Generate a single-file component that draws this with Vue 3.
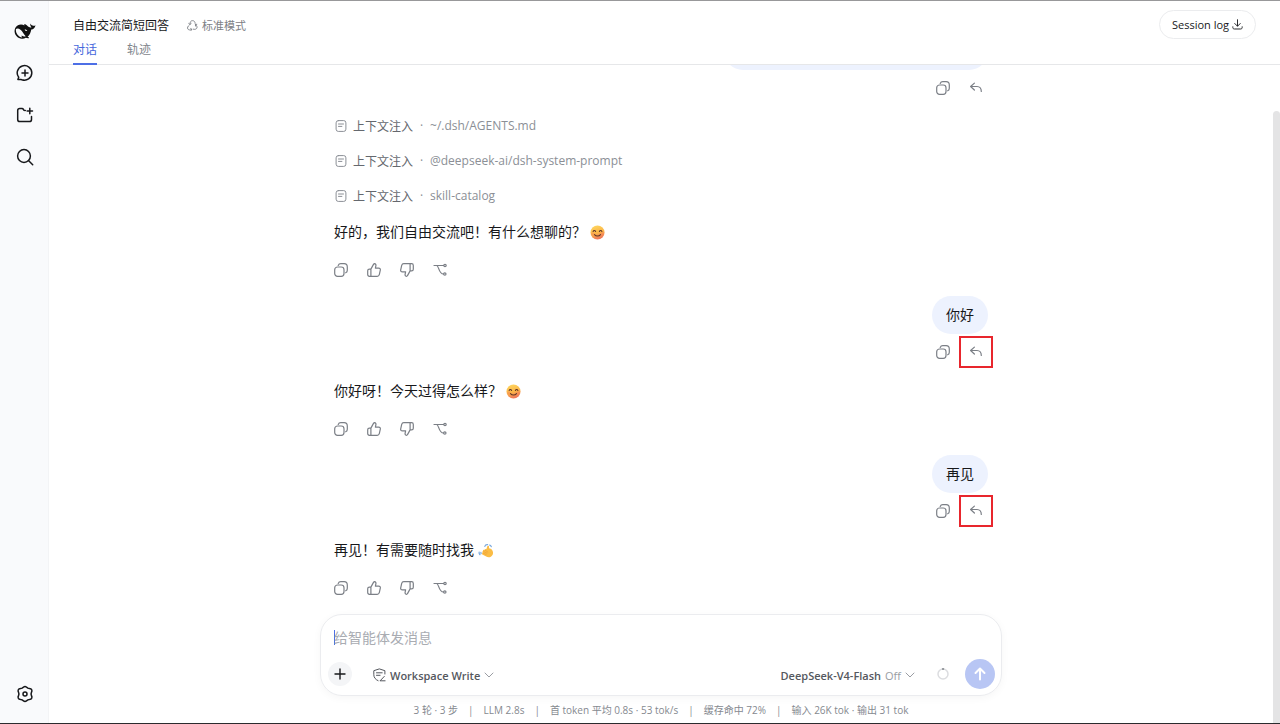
<template>
  <div class="app">
    <svg class="sprite" aria-hidden="true">
      <symbol id="copy" viewBox="0 0 14 14">
        <rect x="0.7" y="4" width="9.3" height="9.3" rx="2.8" />
        <path d="M4.2 2.4C4.7 1.2 5.6 .7 6.8 .7h3.4c2 0 3.1 1.2 3.1 3.2v3.3c0 1.3-.6 2.2-1.6 2.6" />
      </symbol>
      <symbol id="up" viewBox="0 0 14 14">
        <path d="M3.9 6.1 6.5 1.4c.2-.5.6-.7 1.1-.7 1 .1 1.5.9 1.300 1.900l-.5 2.500h3.200c1.200 0 2 .9 1.700 2.100l-1 4.400c-.3 1.100-1 1.700-2.100 1.700H2.400c-1 0-1.700-.7-1.700-1.700V7.800c0-1 .7-1.700 1.700-1.700h1.500zM3.900 6.100v7.100" />
      </symbol>
      <symbol id="down" viewBox="0 0 14 14">
        <path d="M10.100 7.900 7.500 12.600c-.2.500-.6.700-1.100.7-1-.1-1.500-.9-1.300-1.900l.5-2.500H2.400C1.200 8.900.4 8 .7 6.800l1-4.400C2 1.300 2.700.7 3.800.7h7.800c1 0 1.700.7 1.700 1.700v3.800c0 1-.7 1.700-1.700 1.700h-1.500zM10.100 7.900V.8" />
      </symbol>
      <symbol id="branch" viewBox="0 0 14 14">
        <path d="M1 2.500h9.600M3.600 2.500c2.500 0 1.800 8.500 6.900 8.500" />
        <circle cx="12" cy="2.500" r="1.200" />
        <circle cx="11.800" cy="11" r="1.200" />
      </symbol>
      <symbol id="reply" viewBox="0 0 14 14">
        <path d="M5.400 2.100 1.600 5.500l3.800 3.500M1.800 5.500h6.200c2.900 0 4.300 1.800 4.300 5" />
      </symbol>
      <symbol id="note" viewBox="0 0 12 12">
        <rect x="1.100" y=".6" width="9.800" height="10.800" rx="2.200" />
        <path d="M3.500 4h5M3.500 6.400h3.400" />
      </symbol>
      <symbol id="chevron" viewBox="0 0 10 10">
        <path d="M1 3l4 4 4-4" />
      </symbol>
    </svg>

    <nav class="sidebar">
      <a class="logo" href="#" aria-label="DeepSeek">
        <svg width="22" height="18" viewBox="0 0 22 18">
          <path
            class="solid"
            d="M21.500 3.200c-1 .7-1.900.5-2.900.3-1.200-.2-1.700-.9-2.300-2-.2 1.600.1 2.800 1.200 3.700-.9.400-1.700.3-2.600-.2C13.400 3.900 12.200 2.700 10.600 2c-.5.4-.5.900-.1 1.400C8.800 2.300 6 2 3.900 3.200 1.500 4.600.3 7.200.6 9.800c.4 3.800 3.400 6.700 7.200 7 1.500.1 2.900-.2 4-1 .9.300 2.500.8 3.100.3.500-.5-.7-.9-1.300-1.300 2.300-2 3.100-4.300 3.700-7.200 2.200-.4 3.700-1.900 4.200-4.400z"
          />
          <path
            class="belly"
            d="M1.900 7.100c1.200-.9 3-.6 4.600.6 2 1.500 3 4.200 5.200 6.500-1.300.9-2.700.2-4-.6-.3.600-.1 1.300.7 1.900C4.600 15.400 1.500 11.500 1.900 7.100z"
          />
          <path class="belly" d="M10.600 7.600c1-.4 2.200.2 2.700 1.400-.9.300-2 .1-2.700-1.400z" />
        </svg>
      </a>
      <button aria-label="新对话">
        <svg width="18" height="18" viewBox="0 0 18 18">
          <path d="M3.600 15.600H1.900l.8-2.300A7.300 7.300 0 1 1 5.900 15.700c-.7-.3-1.400-.3-2.300-.1zM9 6v6M6 9h6" />
        </svg>
      </button>
      <button aria-label="新建工作区">
        <svg width="18" height="18" viewBox="0 0 18 18">
          <path d="M9.300 4.600C8.200 4.600 7.700 4.200 7.400 3.400 7.100 2.800 6.600 2.500 6 2.500H3.800c-1.300 0-2.100.8-2.100 2.100v8.800c0 1.300.8 2.100 2.100 2.100h9.600c1.300 0 2.100-.8 2.100-2.100V10.500M13.800 2.300v5.400M11.100 5h5.400" />
        </svg>
      </button>
      <button aria-label="搜索">
        <svg width="18" height="18" viewBox="0 0 18 18">
          <circle cx="8" cy="8" r="6.400" />
          <path d="m12.700 12.700 4 4" />
        </svg>
      </button>
      <button class="settings" aria-label="设置">
        <svg width="18" height="18" viewBox="0 0 18 18">
          <path d="M7.500 2.200q1.500-1.200 3 0l1.400 1q.6.300 1.400.3 2 .1 2.500 1.600.4 1.200-.4 2.400-.7 1.500 0 3 .8 1.200.4 2.400-.5 1.500-2.500 1.600-.8 0-1.400.3l-1.400 1q-1.500 1.200-3 0l-1.400-1q-.6-.3-1.400-.3-2-.1-2.500-1.600-.4-1.200.4-2.400.7-1.500 0-3-.8-1.200-.4-2.400.5-1.500 2.500-1.600.8 0 1.400-.3z" />
          <circle cx="9" cy="9" r="2" />
        </svg>
      </button>
    </nav>

    <main class="main">
      <header class="header">
        <div class="heading">
          <div class="title-row">
            <h1>自由交流简短回答</h1>
            <span class="mode">
              <svg width="11" height="11" viewBox="0 0 12 12">
                <path d="M3.200 4.600C3.200 2 4.300.7 6 .7s2.900 1.300 2.900 3M9.200 4.900c1.600 1.200 2.200 2.700 1.500 4-.6 1.200-2.200 1.700-3.900 1.100M5 10.300c-1.700.9-3.400.7-4.100-.5-.8-1.300-.1-3 1.400-4M1.900 3.900l1.300 1 1.300-1M9.300 6.600l-.1-1.700 1.500-.2M4 9l1.100 1.200-.7 1.300" />
              </svg>
              标准模式
            </span>
          </div>
          <div class="tabs">
            <button
              v-for="tab in tabs"
              :key="tab"
              :class="{ active: tab === activeTab }"
              @click="activeTab = tab"
            >{{ tab }}</button>
          </div>
        </div>
        <button class="session-log">
          Session log
          <svg width="11" height="11" viewBox="0 0 12 12">
            <path d="M6 .8v6.800M3 4.900l3 3 3-3M.9 8.500v.7c0 1.100.6 1.700 1.700 1.700h6.800c1.100 0 1.700-.6 1.700-1.700v-.7" />
          </svg>
        </button>
      </header>

      <div class="body">
        <div class="column">
          <div class="chat">
            <div class="bubble clipped"></div>
            <div class="actions user">
              <button aria-label="复制"><svg><use href="#copy" /></svg></button>
              <button aria-label="撤回"><svg><use href="#reply" /></svg></button>
            </div>

            <ul class="context">
              <li v-for="item in contexts" :key="item">
                <svg><use href="#note" /></svg>
                <span class="kind">上下文注入</span>
                <span class="dot">·</span>
                <span>{{ item }}</span>
              </li>
            </ul>

            <template v-for="(turn, i) in turns" :key="i">
              <template v-if="turn.user">
                <div class="bubble">{{ turn.user }}</div>
                <div class="actions user">
                  <button aria-label="复制"><svg><use href="#copy" /></svg></button>
                  <button class="marked" aria-label="撤回"><svg><use href="#reply" /></svg></button>
                </div>
              </template>
              <p class="answer">
                {{ turn.answer }}
                <svg v-if="turn.emoji === 'smile'" class="emoji" viewBox="0 0 16 16">
                  <defs>
                    <linearGradient id="face" x1="0" y1="0" x2="0.300" y2="1">
                      <stop offset="0" stop-color="#ffdb62" />
                      <stop offset="0.600" stop-color="#fbb548" />
                      <stop offset="1" stop-color="#ef7a58" />
                    </linearGradient>
                  </defs>
                  <circle cx="8" cy="8" r="7.500" fill="url(#face)" />
                  <circle cx="3" cy="9.500" r="1.800" fill="#f4775c" opacity="0.350" />
                  <circle cx="13" cy="9.500" r="1.800" fill="#f4775c" opacity="0.350" />
                  <path
                    d="M3.300 7c.5-1.400 2.200-1.400 2.700 0M10 7c.5-1.400 2.200-1.400 2.700 0M4.800 10.200c1.600 2 4.800 2 6.400 0"
                    fill="none" stroke="#5e3428" stroke-width="1.100" stroke-linecap="round"
                  />
                </svg>
                <svg v-else class="emoji" viewBox="-1 0 16 16">
                  <path
                    d="M3.600 12.200c-.8-.6-.3-1.700.6-1.500-1.200-.7-.7-2.100.5-1.800-.9-1-.1-2.200 1-1.600l.7.4c-.5-1.100.6-1.900 1.500-1.100l.9-2.800c.4-1.400 2-1.200 2 .2l-.1 1.700c1.500.3 3.200 1.200 3.900 2.800 1 2.300.3 4.900-1.900 6.100-1.600.9-3.500.7-5-.1z"
                    fill="#fbbd45"
                  />
                  <path d="M4.500 10.800l3.200 1.500M5 9l3.500 1.900M6.500 7.700l3 2" fill="none" stroke="#ea9734" stroke-width="0.600" />
                  <path
                    d="M6.300 3.600C6.700 2.300 7.800 1.500 9.200 1.700M11.500 2.200c.9.300 1.400.9 1.700 1.700M.2 9.800c-.2 1.100.1 2 .9 2.700M2.100 9.900c-.1.600 0 1 .3 1.400"
                    fill="none" stroke="#79a8de" stroke-width="1.300" stroke-linecap="round"
                  />
                </svg>
              </p>
              <div class="actions">
                <button v-for="a in answerActions" :key="a.icon" :aria-label="a.label">
                  <svg><use :href="'#' + a.icon" /></svg>
                </button>
              </div>
            </template>
          </div>

          <form class="composer" @submit.prevent>
            <div class="field">
              <span class="caret"></span>
              <input v-model="draft" type="text" placeholder="给智能体发消息" aria-label="给智能体发消息" />
            </div>
            <div class="toolbar">
              <button type="button" class="add" aria-label="添加">
                <svg width="12" height="12" viewBox="0 0 12 12"><path d="M6 1v10M1 6h10" /></svg>
              </button>
              <button type="button" class="picker access">
                <svg width="13" height="14" viewBox="0 0 13 14">
                  <path d="M11.900 6V2.700L6.300.9.800 2.700v4c0 2.900 1.800 4.900 4.300 6M3.500 4.800h5.700M3.500 7.300h3.600M7.300 12.800h4.800M7.300 12.600l4-4.200" />
                </svg>
                Workspace Write
                <svg class="chevron"><use href="#chevron" /></svg>
              </button>
              <button type="button" class="picker model">
                DeepSeek-V4-Flash <span class="effort">Off</span>
                <svg class="chevron"><use href="#chevron" /></svg>
              </button>
              <svg class="usage" viewBox="0 0 12 12">
                <circle cx="6" cy="6" r="5" />
                <path d="M5.600 1h.9" />
              </svg>
              <button type="submit" class="send" aria-label="发送">
                <svg width="14" height="14" viewBox="0 0 14 14"><path d="M7 12.500V1.500M2.500 6 7 1.500 11.500 6" /></svg>
              </button>
            </div>
          </form>

          <footer class="stats">
            <span v-for="stat in stats" :key="stat">{{ stat }}</span>
          </footer>
        </div>
        <div class="scrollbar"></div>
      </div>
    </main>
  </div>
</template>

<script setup>
import { ref } from 'vue'

const tabs = ['对话', '轨迹']
const activeTab = ref('对话')
const draft = ref('')

const contexts = ['~/.dsh/AGENTS.md', '@deepseek-ai/dsh-system-prompt', 'skill-catalog']

const turns = [
  { answer: '好的，我们自由交流吧！有什么想聊的？', emoji: 'smile' },
  { user: '你好', answer: '你好呀！今天过得怎么样？', emoji: 'smile' },
  { user: '再见', answer: '再见！有需要随时找我', emoji: 'wave' }
]

const answerActions = [
  { icon: 'copy', label: '复制' },
  { icon: 'up', label: '喜欢' },
  { icon: 'down', label: '不喜欢' },
  { icon: 'branch', label: '分支' }
]

const stats = [
  '3 轮 · 3 步',
  'LLM 2.8s',
  '首 token 平均 0.8s · 53 tok/s',
  '缓存命中 72%',
  '输入 26K tok · 输出 31 tok'
]
</script>

<style>
body {
  margin: 0;
}
</style>

<style scoped>
.app {
  box-sizing: border-box;
  display: flex;
  height: 100vh;
  border-top: 1px solid #98989a;
  border-bottom: 1px solid #2b2b2e;
  background: #fff;
  color: #17181b;
  font-family: "Open Sans", "Noto Sans CJK SC", sans-serif;
  font-size: 12px;
}

.sprite {
  position: absolute;
  width: 0;
  height: 0;
}

svg {
  flex: none;
  fill: none;
  stroke: currentColor;
  stroke-linecap: round;
  stroke-linejoin: round;
}

button {
  padding: 0;
  border: 0;
  background: none;
  color: inherit;
  font: inherit;
  cursor: pointer;
}

/* sidebar */
.sidebar {
  display: flex;
  flex: none;
  flex-direction: column;
  align-items: center;
  gap: 24px;
  box-sizing: border-box;
  width: 49px;
  padding: 21px 0 20px 1px;
  background: #f9fafc;
  border-right: 1px solid #f3f4f6;
}

.sidebar svg {
  display: block;
  stroke-width: 1.5;
}

.logo {
  color: #111;
}

.sidebar .logo svg {
  stroke: none;
}

.solid {
  fill: #111;
}

.belly {
  fill: #f9fafc;
}

.settings {
  margin-top: auto;
}

/* header */
.main {
  display: flex;
  flex: 1;
  flex-direction: column;
  min-width: 0;
}

.header {
  display: flex;
  justify-content: space-between;
  align-items: flex-start;
  padding: 0 24px;
  border-bottom: 1px solid #e6e7e9;
}

.title-row {
  display: flex;
  align-items: center;
  gap: 18px;
  height: 24px;
  padding-top: 12px;
}

h1 {
  margin: 0;
  font-size: 12px;
  font-weight: 400;
}

.mode {
  display: flex;
  align-items: center;
  gap: 4px;
  color: #7d8085;
  font-size: 11px;
}

.tabs {
  display: flex;
  gap: 30px;
}

.tabs button {
  height: 28px;
  padding-bottom: 2px;
  border-bottom: 2px solid transparent;
  color: #81858c;
}

.tabs .active {
  border-color: #4d6fe6;
  color: #4568dc;
}

.header {
  height: 63px;
}

.session-log {
  display: flex;
  align-items: center;
  gap: 3px;
  height: 29px;
  margin-top: 9px;
  padding: 0 12px;
  border: 1px solid #ebecee;
  border-radius: 15px;
  font-size: 11px;
}

/* conversation */
.body {
  display: flex;
  flex: 1;
  min-height: 0;
}

.column {
  display: flex;
  flex: 1;
  flex-direction: column;
  align-items: center;
  min-width: 0;
}

.scrollbar {
  width: 7px;
  margin-top: 46px;
  border-radius: 4px 4px 0 0;
  background: #e4e4e5;
}

.chat {
  display: flex;
  flex: 1;
  flex-direction: column;
  justify-content: flex-end;
  box-sizing: border-box;
  width: 100%;
  max-width: 682px;
  min-height: 0;
  padding: 0 14px 10px;
  overflow: hidden;
}

.bubble {
  flex: none;
  align-self: flex-end;
  box-sizing: border-box;
  height: 38px;
  margin: 10px 0 2px;
  padding: 0 14px;
  border-radius: 19px;
  background: #edf2fe;
  font-size: 14px;
  line-height: 38px;
}

.clipped {
  width: 264px;
}

.actions {
  display: flex;
  flex: none;
  align-items: center;
  gap: 19px;
  height: 32px;
  color: #7b7f86;
}

.actions.user {
  justify-content: flex-end;
  padding-right: 5px;
}

.actions button {
  position: relative;
  height: 14px;
}

.actions svg {
  display: block;
  width: 14px;
  height: 14px;
  stroke-width: 1.2;
}

.marked::after {
  position: absolute;
  inset: -9px -10px;
  border: 2px solid #e8262d;
  content: "";
}

.context {
  flex: none;
  margin: 4px 0 5px;
  padding: 0;
  list-style: none;
  color: #8b8f96;
}

.context li {
  display: flex;
  align-items: center;
  height: 35px;
}

.context svg {
  width: 12px;
  height: 12px;
  margin: 0 6px 0 1px;
}

.kind {
  color: #65686e;
}

.dot {
  width: 17px;
  text-align: center;
}

.answer {
  display: flex;
  flex: none;
  align-items: center;
  gap: 4px;
  margin: 0 0 8px;
  font-size: 14px;
  line-height: 28px;
}

.actions.user + .answer {
  margin-top: 9px;
}

.emoji {
  width: 15px;
  height: 15px;
  stroke: none;
}

/* composer */
.composer {
  box-sizing: border-box;
  width: 100%;
  max-width: 682px;
  padding: 8px 6px 6px 7px;
  border: 1px solid #ebecef;
  border-radius: 22px;
  box-shadow: 0 2px 8px rgba(0, 0, 0, .04);
}

.field {
  display: flex;
  align-items: center;
  height: 28px;
  padding-left: 6px;
}

.caret {
  width: 1px;
  height: 15px;
  margin-right: -1px;
  background: #4d6fe6;
}

.field input {
  flex: 1;
  min-width: 0;
  height: 28px;
  padding: 0;
  border: 0;
  outline: 0;
  background: none;
  color: inherit;
  font: inherit;
  font-size: 14px;
}

.field input::placeholder {
  color: #a9acb2;
  opacity: 1;
}

.toolbar {
  display: flex;
  align-items: center;
  height: 30px;
  margin-top: 8px;
}

.add {
  display: grid;
  place-items: center;
  width: 24px;
  height: 24px;
  border-radius: 50%;
  background: #f4f5f7;
}

.add svg {
  stroke-width: 1.4;
}

.picker {
  display: flex;
  align-items: center;
  gap: 4px;
  padding-top: 2px;
  color: #55585e;
  font-size: 11px;
  font-weight: 600;
}

.access {
  margin-left: 21px;
}

.model {
  margin-left: auto;
}

.effort {
  color: #9a9da3;
  font-weight: 400;
}

.chevron {
  width: 10px;
  height: 10px;
  color: #9a9da3;
}

.usage {
  width: 12px;
  height: 12px;
  margin: 0 16px 0 22px;
  color: #dcdde0;
  stroke-width: 1.5;
}

.usage path {
  stroke: #777a80;
}

.send {
  display: grid;
  place-items: center;
  width: 30px;
  height: 30px;
  border-radius: 50%;
  background: #b8c6f4;
  color: #fff;
}

.send svg {
  stroke-width: 2;
}

.stats {
  display: flex;
  height: 27px;
  align-items: center;
  color: #85898f;
  font-size: 10px;
  white-space: nowrap;
}

.stats span + span::before {
  margin: 0 10px;
  content: "|";
}
</style>
